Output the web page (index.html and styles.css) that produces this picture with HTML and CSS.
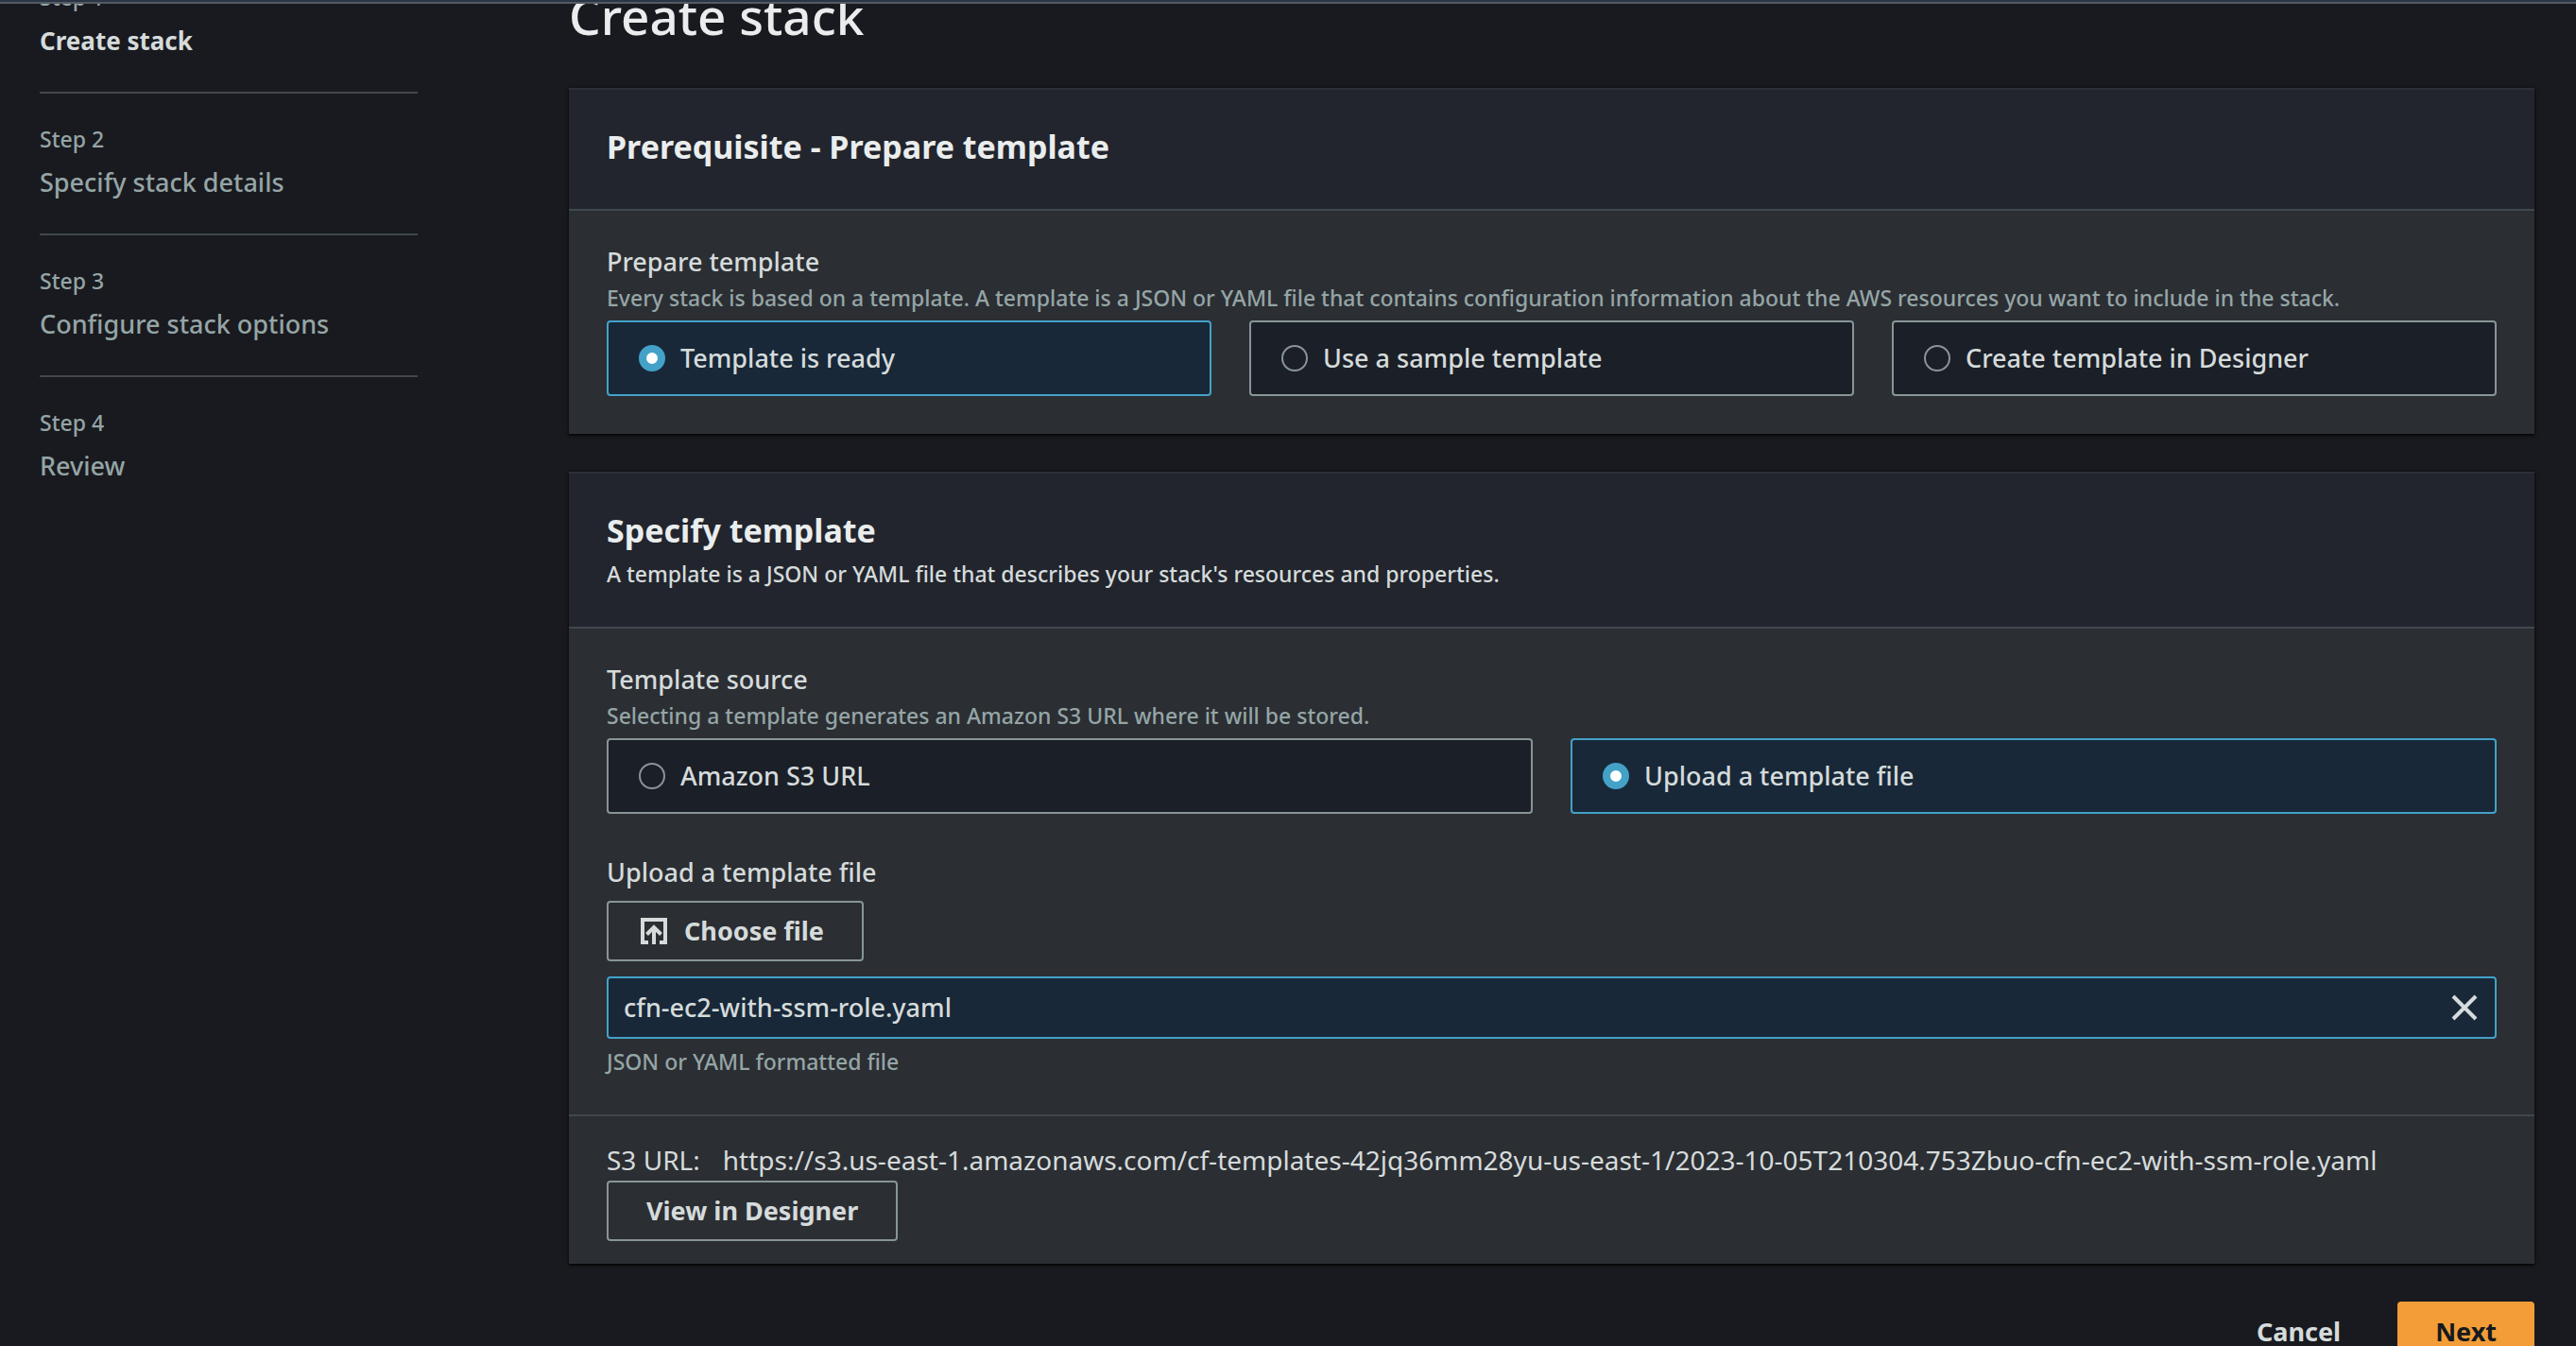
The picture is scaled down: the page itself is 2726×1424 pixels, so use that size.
FILE: index.html
```html
<!DOCTYPE html>
<html lang="en">
<head>
<meta charset="utf-8">
<meta name="viewport" content="width=device-width, initial-scale=1">
<title>Create stack - CloudFormation</title>
<link rel="stylesheet" href="styles.css">
</head>
<body>
<header class="topbar"></header>
<div class="layout">
  <nav class="steps" aria-label="Steps">
    <ol class="steps-list">
      <li class="step step-current"><span class="step-label">Step 1</span><span class="step-title">Create stack</span></li>
      <li class="step"><span class="step-label">Step 2</span><span class="step-title">Specify stack details</span></li>
      <li class="step"><span class="step-label">Step 3</span><span class="step-title">Configure stack options</span></li>
      <li class="step"><span class="step-label">Step 4</span><span class="step-title">Review</span></li>
    </ol>
  </nav>
  <main class="content">
    <h1 class="page-title">Create stack</h1>
    <form class="wizard">
      <section class="panel">
        <div class="panel-header"><h2 class="panel-title">Prerequisite - Prepare template</h2></div>
        <div class="panel-body">
          <fieldset class="field">
            <legend class="label">Prepare template</legend>
            <p class="hint">Every stack is based on a template. A template is a JSON or YAML file that contains configuration information about the AWS resources you want to include in the stack.</p>
            <div class="tiles">
              <label class="tile"><input class="radio" type="radio" name="prepare" checked>Template is ready</label>
              <label class="tile"><input class="radio" type="radio" name="prepare">Use a sample template</label>
              <label class="tile"><input class="radio" type="radio" name="prepare">Create template in Designer</label>
            </div>
          </fieldset>
        </div>
      </section>
      <section class="panel">
        <div class="panel-header">
          <h2 class="panel-title">Specify template</h2>
          <p class="panel-description">A template is a JSON or YAML file that describes your stack's resources and properties.</p>
        </div>
        <div class="panel-body panel-body-upload">
          <fieldset class="field">
            <legend class="label">Template source</legend>
            <p class="hint">Selecting a template generates an Amazon S3 URL where it will be stored.</p>
            <div class="tiles">
              <label class="tile"><input class="radio" type="radio" name="source">Amazon S3 URL</label>
              <label class="tile"><input class="radio" type="radio" name="source" checked>Upload a template file</label>
            </div>
          </fieldset>
          <div class="upload">
            <span class="label" id="upload-label">Upload a template file</span>
            <button class="button upload-button" type="button" aria-describedby="upload-label">
              <svg class="icon" viewBox="0 0 28 28" aria-hidden="true"><path d="M8 26H2V2h24v24h-6M14 28V11M6.500 17.500L14 10l7.500 7.500" fill="none" stroke="currentColor" stroke-width="4"/></svg>
              Choose file
            </button>
            <div class="file-token">
              <span>cfn-ec2-with-ssm-role.yaml</span>
              <button class="dismiss" type="button" aria-label="Remove file">
                <svg class="icon" viewBox="0 0 28 28" aria-hidden="true"><path d="M2 2l24 24M26 2L2 26" fill="none" stroke="currentColor" stroke-width="4"/></svg>
              </button>
            </div>
            <p class="hint upload-hint">JSON or YAML formatted file</p>
          </div>
        </div>
        <div class="panel-footer">
          <div class="s3-url"><span>S3 URL:</span><span>https://s3.us-east-1.amazonaws.com/cf-templates-42jq36mm28yu-us-east-1/2023-10-05T210304.753Zbuo-cfn-ec2-with-ssm-role.yaml</span></div>
          <button class="button" type="button">View in Designer</button>
        </div>
      </section>
      <div class="actions">
        <button class="button button-link" type="button">Cancel</button>
        <button class="button button-primary" type="submit">Next</button>
      </div>
    </form>
  </main>
</div>
</body>
</html>
```
FILE: styles.css
```css
:root {
  --text: #d5dbdb;
  --heading: #eaeded;
  --muted: #95a5a6;
  --border: #879596;
  --divider: #414750;
  --accent: #44a1c8;
}

* { box-sizing: border-box; }

html, body { height: 100%; }

body {
  margin: 0;
  overflow: hidden;
  background: #191a1f;
  color: var(--text);
  font-family: "Noto Sans", "Open Sans", sans-serif;
  font-size: 27px;
  font-weight: 500;
  line-height: 40px;
}

h1, h2, p, ol, fieldset, legend { margin: 0; padding: 0; }

.topbar {
  position: relative;
  z-index: 1;
  height: 4px;
  background: #2a3646;
  border-bottom: 2px solid #545b64;
}

/* The page is scrolled slightly under the top bar. */
.layout {
  display: flex;
  gap: 160px;
  margin-top: -55px;
  padding: 0 44px 0 42px;
}

.steps { flex: 0 0 400px; }
.steps-list { list-style: none; }

.step {
  display: flex;
  flex-direction: column;
  gap: 6px;
  padding: 30px 0 32px;
  border-bottom: 2px solid var(--divider);
  color: var(--muted);
}
.step:last-child { border-bottom: 0; }
.step-label { font-size: 23px; line-height: 36px; }
.step-title { line-height: 44px; }
.step-current .step-title { color: var(--text); font-size: 26px; font-weight: 700; }

.content { flex: 1; min-width: 0; padding-top: 44px; }

.page-title {
  margin-bottom: 52px;
  color: var(--heading);
  font-size: 53px;
  font-weight: 500;
  line-height: 48px;
}

.wizard { display: flex; flex-direction: column; gap: 40px; }

.panel {
  background: #2b2e33;
  border-top: 2px solid #2c2f34;
  box-shadow: 0 2px 2px #000000a0, 0 0 4px #00000080;
}
.panel-header {
  padding: 38px 40px;
  background: #22252d;
  border-bottom: 2px solid var(--divider);
}
.panel-title {
  margin-bottom: 6px;
  color: var(--heading);
  font-size: 34px;
  font-weight: 700;
  line-height: 44px;
}
.panel-description { font-size: 23px; line-height: 36px; }
.panel-body { padding: 34px 40px 40px; }
.panel-body-upload { padding-bottom: 38px; }

.field { border: 0; min-width: 0; }
.label { display: block; line-height: 40px; }
.hint { color: var(--muted); font-size: 23px; line-height: 36px; }

.tiles { display: flex; gap: 40px; margin-top: 6px; }
.tile {
  display: flex;
  flex: 1;
  align-items: center;
  gap: 16px;
  height: 80px;
  padding: 0 32px;
  background: #1b1f27;
  border: 2px solid var(--border);
  border-radius: 4px;
}
.tile:has(:checked) { background: #182838; border-color: var(--accent); }

.radio {
  appearance: none;
  flex: none;
  width: 28px;
  height: 28px;
  margin: 0;
  border: 2px solid var(--border);
  border-radius: 50%;
}
.radio:checked { background: #fff; border: 8px solid var(--accent); }

.upload { margin-top: 42px; }

.button {
  display: inline-flex;
  align-items: center;
  height: 64px;
  padding: 0 40px;
  background: transparent;
  border: 2px solid var(--border);
  border-radius: 4px;
  color: var(--text);
  font: inherit;
  font-weight: 700;
}
.upload-button { display: flex; gap: 18px; margin-top: 10px; padding: 0 40px 0 34px; }
.icon { display: block; flex: none; width: 28px; height: 28px; }

.file-token {
  display: flex;
  align-items: center;
  justify-content: space-between;
  height: 66px;
  margin-top: 16px;
  padding: 0 18px 0 16px;
  background: #182838;
  border: 2px solid var(--accent);
  border-radius: 4px;
}
.dismiss { padding: 0; background: none; border: 0; color: var(--text); }
.upload-hint { margin-top: 6px; }

.panel-footer { padding: 26px 40px 24px; border-top: 2px solid var(--divider); }
.panel-footer .button { display: block; margin-top: 2px; }
.s3-url { display: flex; gap: 24px; font-size: 28px; font-weight: 400; }

.actions { display: flex; justify-content: flex-end; gap: 18px; }
.button-link { border-color: transparent; }
.button-primary { padding: 0 38px; background: #f29d38; border-color: #f29d38; color: #16191f; }
```
